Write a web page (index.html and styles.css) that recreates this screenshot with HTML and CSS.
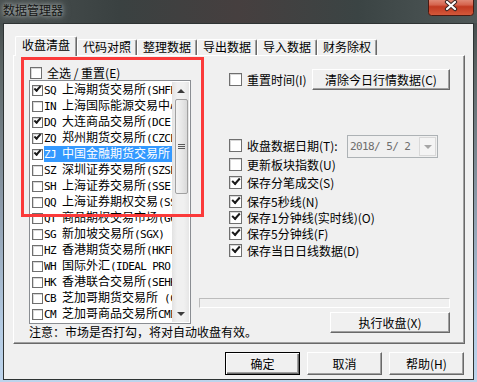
FILE: index.html
```html
<!DOCTYPE html>
<html lang="zh-CN">
<head>
    <meta charset="UTF-8">
    <title>数据管理器</title>
    <link rel="stylesheet" href="styles.css">
</head>
<body>
    <div class="window">
        <div class="titlebar">
            <span class="title">数据管理器</span>
            <div class="close">
                <svg width="46" height="16" viewBox="0 0 46 16">
                    <defs>
                        <linearGradient id="cg" x1="0" y1="0" x2="0" y2="1">
                            <stop offset="0" stop-color="#e9a696"/>
                            <stop offset="0.45" stop-color="#d5644e"/>
                            <stop offset="0.55" stop-color="#c13a22"/>
                            <stop offset="1" stop-color="#d55a3c"/>
                        </linearGradient>
                    </defs>
                    <rect x="0.5" y="-4" width="45" height="19.5" rx="3" fill="url(#cg)" stroke="#4a1a12"/>
                    <path d="M19 2 L27 9 M27 2 L19 9" stroke="#3b2724" stroke-width="4.2" stroke-linecap="round"/>
                    <path d="M19 2 L27 9 M27 2 L19 9" stroke="#fff" stroke-width="2.2" stroke-linecap="round"/>
                </svg>
            </div>
        </div>

        <div class="client">
            <div class="tabs">
                <div class="tab active">收盘清盘</div>
                <div class="tab">代码对照</div>
                <div class="tab">整理数据</div>
                <div class="tab">导出数据</div>
                <div class="tab">导入数据</div>
                <div class="tab">财务除权</div>
            </div>

            <div class="panel">
                <div class="col-left">
                    <div class="all-row"><span class="cb"></span><span class="lbl">全选 / 重置(E)</span></div>
                    <div class="listbox">
                        <div class="items">
                            <div class="item"><span class="cb sm on"></span><span class="txt"><span class="a">SQ </span>上海期货交易所<span class="a">(SHFE)</span></span></div>
                            <div class="item"><span class="cb sm"></span><span class="txt"><span class="a">IN </span>上海国际能源交易中心</span></div>
                            <div class="item"><span class="cb sm on"></span><span class="txt"><span class="a">DQ </span>大连商品交易所<span class="a">(DCE)</span></span></div>
                            <div class="item"><span class="cb sm on"></span><span class="txt"><span class="a">ZQ </span>郑州期货交易所<span class="a">(CZCE)</span></span></div>
                            <div class="item sel"><span class="cb sm on"></span><span class="txt"><span class="a">ZJ </span>中国金融期货交易所</span></div>
                            <div class="item"><span class="cb sm"></span><span class="txt"><span class="a">SZ </span>深圳证券交易所<span class="a">(SZSE)</span></span></div>
                            <div class="item"><span class="cb sm"></span><span class="txt"><span class="a">SH </span>上海证券交易所<span class="a">(SSE)</span></span></div>
                            <div class="item"><span class="cb sm"></span><span class="txt"><span class="a">QQ </span>上海证券期权交易<span class="a">(SSE)</span></span></div>
                            <div class="item"><span class="cb sm"></span><span class="txt"><span class="a">QT </span>商品期权交易市场<span class="a">(GQ)</span></span></div>
                            <div class="item"><span class="cb sm"></span><span class="txt"><span class="a">SG </span>新加坡交易所<span class="a">(SGX)</span></span></div>
                            <div class="item"><span class="cb sm"></span><span class="txt"><span class="a">HZ </span>香港期货交易所<span class="a">(HKFE)</span></span></div>
                            <div class="item"><span class="cb sm"></span><span class="txt"><span class="a">WH </span>国际外汇<span class="a">(IDEAL PRO)</span></span></div>
                            <div class="item"><span class="cb sm"></span><span class="txt"><span class="a">HK </span>香港联合交易所<span class="a">(SEHK)</span></span></div>
                            <div class="item"><span class="cb sm"></span><span class="txt"><span class="a">CB </span>芝加哥期货交易所<span class="a"> (CBOT)</span></span></div>
                            <div class="item"><span class="cb sm"></span><span class="txt"><span class="a">CM </span>芝加哥商品交易所<span class="a">CME</span></span></div>
                        </div>
                        <div class="sb">
                            <div class="sb-btn"><span class="arr up"></span></div>
                            <div class="sb-thumb"><span class="grip"></span></div>
                            <div class="sb-track"></div>
                            <div class="sb-btn"><span class="arr down"></span></div>
                        </div>
                    </div>
                    <div class="note">注意：市场是否打勾，将对自动收盘有效。</div>
                </div>

                <div class="col-right">
                    <div class="row-reset">
                        <span class="cb"></span><span class="lbl">重置时间(I)</span>
                        <div class="btn wide">清除今日行情数据(C)</div>
                    </div>
                    <div class="row-date">
                        <span class="cb"></span><span class="lbl">收盘数据日期(T):</span>
                        <div class="combo">
                            <span class="combo-val">2018/ 5/ 2</span>
                            <span class="combo-btn"><span class="arr down dis"></span></span>
                        </div>
                    </div>
                    <div class="chk r-upd"><span class="cb"></span><span class="lbl">更新板块指数(U)</span></div>
                    <div class="chk r-tick"><span class="cb on"></span><span class="lbl">保存分笔成交(S)</span></div>
                    <div class="chk r-5s"><span class="cb on"></span><span class="lbl">保存5秒线(N)</span></div>
                    <div class="chk r-1m"><span class="cb on"></span><span class="lbl">保存1分钟线(实时线)(O)</span></div>
                    <div class="chk r-5m"><span class="cb on"></span><span class="lbl">保存5分钟线(F)</span></div>
                    <div class="chk r-day"><span class="cb on"></span><span class="lbl">保存当日日线数据(D)</span></div>
                    <div class="progress"></div>
                    <div class="btn run">执行收盘(X)</div>
                </div>

                <div class="mark"></div>
            </div>

            <div class="buttons">
                <div class="btn dlg default">确定</div>
                <div class="btn dlg">取消</div>
                <div class="btn dlg">帮助(H)</div>
            </div>
        </div>
    </div>
</body>
</html>
```

FILE: styles.css
```css
* {
    margin: 0;
    padding: 0;
    box-sizing: border-box;
}

body {
    width: 477px;
    height: 382px;
    overflow: hidden;
    font-family: "Noto Sans CJK SC", "Liberation Sans", sans-serif;
    font-size: 12px;
    color: #000;
}

.window {
    height: 382px;
    display: flex;
    flex-direction: column;
    background: linear-gradient(180deg, #3c4343 0%, #5d6666 18%, #8f9eae 55%, #b4cbe3 85%, #bdd4ec 100%);
}

/* title bar */
.titlebar {
    height: 23px;
    display: flex;
    justify-content: space-between;
    align-items: flex-start;
    background: linear-gradient(90deg, #4a5151 0%, #3a4141 25%, #463f3f 50%, #3b4444 75%, #4f5858 100%);
}
.title {
    margin: 2px 0 0 3px;
    line-height: 16px;
    color: #141414;
    text-shadow: 0 0 4px rgba(230, 235, 235, 0.75), 0 0 8px rgba(230, 235, 235, 0.5);
}
.close {
    width: 46px;
    height: 16px;
    margin-right: 3px;
}
.close svg {
    display: block;
}

/* client area */
.client {
    flex: 1;
    margin: 0 3px 2px;
    border: 1px solid #2e3333;
    background: #f0f0f0;
    display: flex;
    flex-direction: column;
}

.tabs {
    height: 31px;
    margin-left: 11px;
    display: flex;
    align-items: flex-end;
}
.tab {
    width: 60px;
    height: 16px;
    line-height: 14px;
    text-align: center;
    border: 1px solid #fff;
    border-right-color: #696969;
    border-bottom: none;
    border-radius: 2px 2px 0 0;
    box-shadow: inset -1px 0 #a0a0a0;
}
.tab.active {
    width: 62px;
    height: 20px;
    line-height: 16px;
    margin-bottom: -1px;
    position: relative;
    z-index: 1;
    background: #f0f0f0;
}

.panel {
    height: 289px;
    margin: 0 8px 0 9px;
    border: 1px solid #fff;
    border-right-color: #696969;
    border-bottom-color: #696969;
    box-shadow: inset -1px -1px #a0a0a0;
    position: relative;
    display: flex;
}

/* checkboxes */
.cb {
    width: 13px;
    height: 13px;
    flex: none;
    position: relative;
    border: 1px solid #6f6f6f;
    background: #fff;
    box-shadow: inset 1px 1px #d8d8d8;
}
.cb.sm {
    width: 11px;
    height: 11px;
    margin: 3px 1px 0 1px;
}
.cb.on::after {
    content: "";
    position: absolute;
    left: 2px;
    top: 1px;
    width: 6px;
    height: 3px;
    border-left: 2px solid #1a1a1a;
    border-bottom: 2px solid #1a1a1a;
    transform: rotate(-48deg);
}
.cb.sm.on::after {
    left: 1px;
    top: 0;
    width: 5px;
    height: 2px;
}

/* left column */
.col-left {
    width: 162px;
    flex: none;
    margin-left: 15px;
    padding-top: 10px;
}
.all-row {
    height: 14px;
    display: flex;
    align-items: flex-start;
}
.all-row .cb {
    width: 12px;
    height: 12px;
    margin: 1px 0 0 1px;
}
.all-row .lbl {
    margin-left: 5px;
    line-height: 13px;
}

.listbox {
    height: 244px;
    display: flex;
    border: 1px solid #8a8d92;
    padding: 1px;
    background: #fff;
}
.items {
    width: 141px;
    overflow: hidden;
}
.item {
    height: 16px;
    display: flex;
    align-items: flex-start;
    white-space: nowrap;
}
.txt {
    height: 16px;
    line-height: 14px;
    padding-right: 2px;
}
.item.sel .txt {
    flex: 1;
    background: #3399ff;
    color: #fff;
}
.a {
    font-family: "DejaVu Sans Mono", "Liberation Mono", monospace;
    font-size: 11px;
    letter-spacing: -0.6px;
    white-space: pre;
}

/* scrollbar */
.sb {
    width: 17px;
    display: flex;
    flex-direction: column;
    background: linear-gradient(90deg, #e2e2e2 0%, #f0f0f0 30%, #f0f0f0 70%, #e6e6e6 100%);
}
.sb-btn {
    height: 17px;
    display: flex;
    align-items: center;
    justify-content: center;
}
.arr {
    width: 0;
    height: 0;
    border-left: 4px solid transparent;
    border-right: 4px solid transparent;
}
.arr.up {
    border-bottom: 4px solid #3c3c3c;
}
.arr.down {
    border-top: 4px solid #3c3c3c;
}
.arr.down.dis {
    border-top-color: #a6a6a6;
}
.sb-thumb {
    height: 95px;
    margin: 0 1px 0 3px;
    border: 1px solid #a0a0a0;
    border-radius: 2px;
    background: linear-gradient(90deg, #f4f4f4 0%, #e8e8e8 50%, #d9d9d9 100%);
    display: flex;
    align-items: center;
    justify-content: center;
}
.grip {
    width: 7px;
    height: 5px;
    border-top: 1px solid #5a5a5a;
    border-bottom: 1px solid #5a5a5a;
    background: linear-gradient(180deg, transparent 1px, #5a5a5a 1px, #5a5a5a 2px, transparent 2px);
}
.sb-track {
    flex: 1;
}

.note {
    margin-top: 1px;
    line-height: 14px;
    white-space: nowrap;
}

/* right column */
.col-right {
    width: 251px;
    flex: none;
    margin-left: 8px;
    display: flex;
    flex-direction: column;
}
.lbl {
    white-space: nowrap;
}
.row-reset {
    height: 21px;
    margin-top: 13px;
    padding-left: 30px;
    display: flex;
    align-items: center;
}
.row-reset .lbl,
.row-date .lbl,
.chk .lbl {
    margin-left: 5px;
}
.row-date {
    height: 23px;
    margin-top: 45px;
    padding-left: 30px;
    display: flex;
    align-items: flex-start;
}
.row-date .cb {
    margin-top: 4px;
}
.row-date .lbl {
    line-height: 22px;
}
.combo {
    width: 91px;
    height: 23px;
    margin: 0 12px 0 auto;
    border: 1px solid #adb2b5;
    background: #f0f0f0;
    display: flex;
    align-items: center;
    justify-content: space-between;
}
.combo-val {
    padding-left: 2px;
    font-family: "DejaVu Sans Mono", "Liberation Mono", monospace;
    font-size: 11px;
    letter-spacing: -0.6px;
    white-space: pre;
    color: #6d6d6d;
}
.combo-btn {
    width: 17px;
    height: 19px;
    margin-right: 1px;
    border: 1px solid #d9d9d9;
    background: #f4f4f4;
    display: flex;
    align-items: center;
    justify-content: center;
}

.chk {
    height: 13px;
    padding-left: 30px;
    display: flex;
    align-items: center;
    line-height: 13px;
}
.r-tick { margin-top: 5px; }
.r-5s { margin-top: 6px; }
.r-1m { margin-top: 3px; }
.r-5m { margin-top: 3px; }
.r-day { margin-top: 4px; }

.progress {
    height: 10px;
    margin-top: 41px;
    border: 1px solid #bcbcbc;
    border-right-color: #fff;
    border-bottom-color: #fff;
}

/* buttons */
.btn {
    height: 21px;
    flex: none;
    display: flex;
    align-items: center;
    justify-content: center;
    white-space: nowrap;
    background: #f0f0f0;
    border: 1px solid #fff;
    border-right-color: #696969;
    border-bottom-color: #696969;
    box-shadow: inset -1px -1px #a0a0a0;
}
.btn.wide {
    width: 138px;
    margin-left: auto;
}
.btn.run {
    width: 120px;
    margin-top: 4px;
    align-self: flex-end;
}

.buttons {
    margin-top: 8px;
    padding-right: 9px;
    display: flex;
    justify-content: flex-end;
    gap: 7px;
}
.btn.dlg {
    width: 75px;
    height: 23px;
}
.btn.default {
    border: 1px solid #000;
    box-shadow: inset 1px 1px #fff, inset -1px -1px #696969, inset -2px -2px #a0a0a0;
}

/* red annotation frame */
.mark {
    position: absolute;
    left: 7px;
    top: 1px;
    width: 183px;
    height: 160px;
    border: 3px solid #fb3a3a;
    pointer-events: none;
}
```
